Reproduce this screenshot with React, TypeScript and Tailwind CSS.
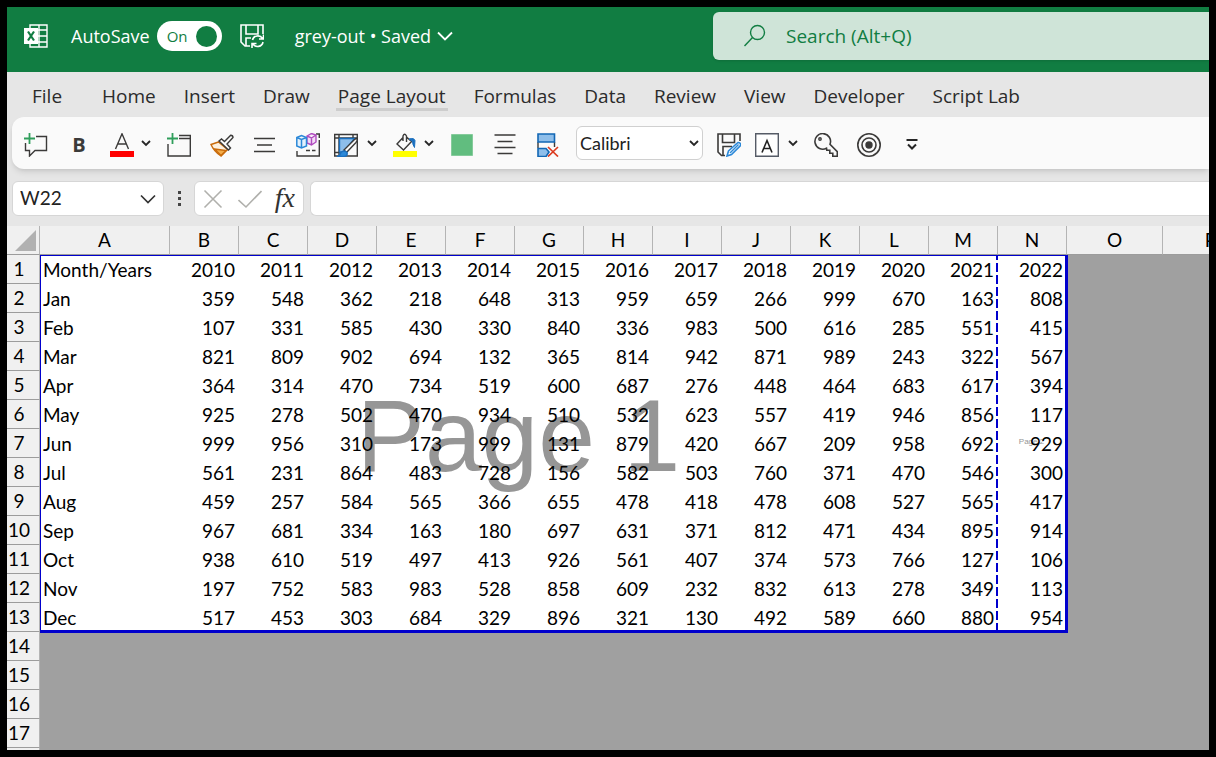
import React from 'react';
import { clsx } from 'clsx';

const tabs = [
  'File',
  'Home',
  'Insert',
  'Draw',
  'Page Layout',
  'Formulas',
  'Data',
  'Review',
  'View',
  'Developer',
  'Script Lab',
];

const years = [2010, 2011, 2012, 2013, 2014, 2015, 2016, 2017, 2018, 2019, 2020, 2021, 2022];

const rows: [string, number[]][] = [
  ['Month/Years', years],
  ['Jan', [359, 548, 362, 218, 648, 313, 959, 659, 266, 999, 670, 163, 808]],
  ['Feb', [107, 331, 585, 430, 330, 840, 336, 983, 500, 616, 285, 551, 415]],
  ['Mar', [821, 809, 902, 694, 132, 365, 814, 942, 871, 989, 243, 322, 567]],
  ['Apr', [364, 314, 470, 734, 519, 600, 687, 276, 448, 464, 683, 617, 394]],
  ['May', [925, 278, 502, 470, 934, 510, 532, 623, 557, 419, 946, 856, 117]],
  ['Jun', [999, 956, 310, 173, 999, 131, 879, 420, 667, 209, 958, 692, 929]],
  ['Jul', [561, 231, 864, 483, 728, 156, 582, 503, 760, 371, 470, 546, 300]],
  ['Aug', [459, 257, 584, 565, 366, 655, 478, 418, 478, 608, 527, 565, 417]],
  ['Sep', [967, 681, 334, 163, 180, 697, 631, 371, 812, 471, 434, 895, 914]],
  ['Oct', [938, 610, 519, 497, 413, 926, 561, 407, 374, 573, 766, 127, 106]],
  ['Nov', [197, 752, 583, 983, 528, 858, 609, 232, 832, 613, 278, 349, 113]],
  ['Dec', [517, 453, 303, 684, 329, 896, 321, 130, 492, 589, 660, 880, 954]],
];

const yearColumns = 'BCDEFGHIJKLMN'.split('');
const emptyRows = [14, 15, 16, 17];

type IconProps = { children: React.ReactNode; className?: string };

const Icon: React.FC<IconProps> = ({ children, className }) => (
  <svg
    viewBox="0 0 24 24"
    fill="none"
    stroke="#3b3a39"
    strokeWidth="1.4"
    className={clsx('size-6 shrink-0', className)}
    aria-hidden="true"
  >
    {children}
  </svg>
);

const Chevron: React.FC = () => (
  <svg viewBox="0 0 14 14" fill="none" stroke="#262626" strokeWidth="1.8" className="size-3.5" aria-hidden="true">
    <path d="M3 5l4 4 4-4" />
  </svg>
);

type ToolProps = { label: string; width?: string; children: React.ReactNode };

const Tool: React.FC<ToolProps> = ({ label, width = 'w-[29px]', children }) => (
  <button type="button" aria-label={label} className={clsx('flex shrink-0 pt-1', width)}>
    {children}
  </button>
);

const MenuArrow: React.FC<{ label: string }> = ({ label }) => (
  <button type="button" aria-label={label} className="flex w-3.5 shrink-0">
    <Chevron />
  </button>
);

const TitleBar: React.FC = () => (
  <header className="bg-[#117d42] pt-[5px] pb-3 text-white">
    <div className="flex h-12 items-center">
      <div className="flex flex-1 items-center pl-[17px] text-[18px] whitespace-nowrap">
        <Icon className="mr-[23px]">
          <path d="M6 4V1h17v22H6v-3M6 6h17M6 12h17M6 18h17M15 1v22" stroke="#fff" />
          <path d="M0 4h14v16H0z" fill="#fff" stroke="none" />
          <path d="M4 7.5l6 9M10 7.5l-6 9" stroke="#117d42" strokeWidth="2.2" />
        </Icon>
        <label className="flex items-center gap-[7px]">
          AutoSave
          <input type="checkbox" defaultChecked className="peer sr-only" />
          <span className="flex h-[30px] w-[65px] items-center justify-between rounded-full bg-white pr-[5px] pl-2.5 text-[15px] text-[#117d42]">
            On
            <span className="size-[21px] rounded-full bg-[#117d42]" />
          </span>
        </label>
        <button type="button" aria-label="Save" className="ml-[18px]">
          <Icon>
            <g stroke="#fff" strokeWidth="1.6">
              <path d="M10 22H5l-4-4V1h22v9" />
              <path d="M6 1v9h12V1" />
              <path d="M6 22v-8h5" />
              <path d="M12.5 16a5.5 5.5 0 0 1 10-1.500M23.500 10.500v4.500h-4.500M23 18a5.500 5.500 0 0 1-10 2M12 24v-4.500h4.500" />
            </g>
          </Icon>
        </button>
        <button type="button" className="ml-[31px] flex items-center gap-1.5">
          grey-out • Saved
          <svg viewBox="0 0 16 16" fill="none" stroke="#fff" strokeWidth="1.8" className="size-4" aria-hidden="true">
            <path d="M1 4.500l7 7 7-7" />
          </svg>
        </button>
      </div>
      <label className="flex h-12 w-[496px] items-center gap-[19px] rounded-l-md bg-[#cfe4d8] pl-[30px] shadow-sm">
        <Icon>
          <g stroke="#117d42">
            <circle cx="14.500" cy="8.500" r="7" />
            <path d="M9.500 13.500L1.500 22" />
          </g>
        </Icon>
        <input
          type="search"
          aria-label="Search"
          placeholder="Search (Alt+Q)"
          className="min-w-0 flex-1 bg-transparent text-[19px] text-[#117d42] outline-none placeholder:text-[#117d42]"
        />
      </label>
    </div>
  </header>
);

const RibbonTabs: React.FC = () => (
  <nav className="flex gap-6 pt-3 pb-1.5 pl-[23px] text-[19px] leading-6 whitespace-nowrap text-[#2b2b2b]">
    {tabs.map((tab) => (
      <a
        key={tab}
        href="#"
        className={clsx(
          'border-b-[3px] px-0.5',
          tab === 'File' && 'mr-3',
          tab === 'Page Layout' ? 'border-[#cdcdcd]' : 'border-transparent'
        )}
      >
        {tab}
      </a>
    ))}
  </nav>
);

const QuickTools: React.FC = () => (
  <div className="ml-[5px] flex h-[52px] items-center gap-3.5 rounded-l-xl bg-[#fafafa] pl-3 shadow-md">
    <Tool label="New Comment">
      <Icon>
        <path d="M12 3.500h10.500v14H11L5.500 23v-5.500h-4V10" />
        <path d="M5.500 0v11M0 5.500h11" stroke="#2f9e5b" strokeWidth="1.800" />
      </Icon>
    </Tool>
    <Tool label="Bold">
      <span className="w-6 text-center font-[Open_Sans] text-[20px] leading-6 font-bold text-[#3b3a39]">B</span>
    </Tool>
    <div className="flex items-center">
      <Tool label="Font Color">
        <Icon>
          <path d="M5.500 16L12 .800 18.500 16M7.800 11h8.400" />
          <path d="M0 18h24v6H0z" fill="#f00" stroke="none" />
        </Icon>
      </Tool>
      <MenuArrow label="Font Color options" />
    </div>
    <Tool label="New Window">
      <Icon>
        <path d="M12 2.500h11.300v20.500H1V11M12 5.500h11.300" />
        <path d="M5.500 0v11M0 5.500h11" stroke="#2f9e5b" strokeWidth="1.800" />
      </Icon>
    </Tool>
    <Tool label="Format Painter">
      <Icon>
        <path d="M8.500 9L1 11.500q3 7 10 11.500l6.500-6.500z" stroke="#c96a0a" fill="#fdf0de" />
        <path d="M4.500 16l11.500 1.500L11 22.500z" fill="#f3ad4a" stroke="#c96a0a" />
        <path d="M9 8l9.500 9 2-2-3.500-4 6-6.500q0-2-2.300-2.200L14.500 8.500 11.500 6z" fill="#fafafa" />
      </Icon>
    </Tool>
    <Tool label="Center">
      <Icon>
        <path d="M1 5.500h21M4 12h15M1 18.500h21" strokeWidth="1.600" />
      </Icon>
    </Tool>
    <Tool label="3D Models" width="w-6">
      <Icon>
        <path d="M20 1h3.300v4M23.300 7v16H1v-5M10 17.500h4M16 17.500h3.500" />
        <path d="M11 3l4.500-2.500L20 2v7l-4.500 3L11 10zM11 3l4.500 2L20 2M15.500 5v7" stroke="#b04bbf" fill="#f2dcf5" />
        <path d="M.800 4.500l4.700-2 5 2v8.500l-5 2-4.700-2zM.800 4.500l4.700 2 5-2M5.500 6.500V15" stroke="#2b88d8" strokeWidth="1.500" fill="#e3f1fc" />
      </Icon>
    </Tool>
    <div className="flex items-center">
      <Tool label="Format Table" width="w-[31px]">
        <Icon>
          <path d="M.700 1.500h22.600v21.500H.700zM.700 5h22.600M5 1.500V23M19 1.500V5M.700 19.500h6" />
          <path d="M5.500 5.500h15L10 19H5.500z" fill="#8ebeea" stroke="#1a6fbf" />
          <path d="M23.500 5.500q-2 0-3 1L10 17l2.500 2.500L22 9.500q1.500-2 1.500-4z" fill="#fafafa" />
          <path d="M3 23.500q3-.500 4-4 3-3 6 0 1 3.500-3 4z" fill="#2b88d8" stroke="#1a6fbf" />
        </Icon>
      </Tool>
      <MenuArrow label="Format Table options" />
    </div>
    <div className="flex items-center">
      <Tool label="Fill Color">
        <Icon>
          <path d="M10 4.500L4 11l6.500 6 8-8.500L13.500 4M10 8V3q1.500-3.500 3.500 0v6" />
          <path d="M16 6q5-1.500 6 1.500l-.500 7q-2-3-2-6z" fill="#1a6fbf" stroke="#1a6fbf" strokeWidth="1" />
          <path d="M0 18h24v6H0z" fill="#ff0" stroke="none" />
        </Icon>
      </Tool>
      <MenuArrow label="Fill Color options" />
    </div>
    <Tool label="Shape Fill">
      <Icon>
        <path d="M1.500 1.500h21v21h-21z" fill="#61bd7f" stroke="#85cb9b" strokeWidth="1" />
      </Icon>
    </Tool>
    <Tool label="Middle Align">
      <Icon>
        <path d="M1.500 2h21M4.500 8.500h15M1.500 14.500h21M4.500 20.500h15" strokeWidth="1.600" />
      </Icon>
    </Tool>
    <Tool label="Delete Rows" width="w-[26px]">
      <Icon>
        <path d="M2 9v6M18.500 9v5" />
        <path d="M2 1h16.500v8H2zM2 15.500h8l3 3.500-3 4.500H2z" fill="#8ebeea" stroke="#1267b4" strokeWidth="1.600" />
        <path d="M12 14l10 9.500M22 14l-10 9.500" stroke="#dc3b1f" strokeWidth="1.700" />
      </Icon>
    </Tool>
    <div className="relative flex w-[127px] shrink-0 items-center">
      <select
        aria-label="Font"
        className="h-[34px] w-full appearance-none rounded-md border border-[#d0d0d0] bg-white pl-[3px] font-[Lato] text-[18px] text-[#222]"
      >
        <option>Calibri</option>
      </select>
      <span className="pointer-events-none absolute right-0.5">
        <Chevron />
      </span>
    </div>
    <Tool label="Save As" width="w-6">
      <Icon>
        <path d="M8 22.500H4.500L1 19V1h22v7M5.500 1v8.500h12V1M6 22.500V13.500h9" strokeWidth="1.600" />
        <path d="M10 23l1.500-5L21 9.500q3 0 2.500 3L14.500 21.500z" fill="#fff" stroke="#2b88d8" strokeWidth="1.600" />
        <path d="M13 20l8.500-8.500" stroke="#2b88d8" strokeWidth="1.400" />
      </Icon>
    </Tool>
    <div className="flex items-center">
      <Tool label="Text Box" width="w-[31px]">
        <Icon>
          <path d="M.700 .700h22.600v22.600H.700z" fill="#fff" stroke="#555b66" />
          <path d="M7 19.500L12 7.500l5 12M8.800 15.500h6.400" strokeWidth="1.600" stroke="#222" />
        </Icon>
      </Tool>
      <MenuArrow label="Text Box options" />
    </div>
    <Tool label="Permissions">
      <Icon>
        <path d="M12.500 15.200a7.800 7.800 0 1 1 3.500-4l7.300 7.500v4.500h-4.500v-3h-3v-3h-3z" strokeWidth="1.600" />
        <circle cx="6" cy="6" r="1.200" />
      </Icon>
    </Tool>
    <Tool label="Record">
      <Icon>
        <circle cx="12" cy="12" r="11.200" strokeWidth="1.600" />
        <circle cx="12" cy="12" r="7" strokeWidth="1.600" />
        <circle cx="12" cy="12" r="3" fill="#3b3a39" />
      </Icon>
    </Tool>
    <Tool label="Customize Quick Access Toolbar" width="w-6">
      <Icon>
        <path d="M6.500 7h11M8 11.500l4 4 4-4" strokeWidth="2" stroke="#262626" />
      </Icon>
    </Tool>
  </div>
);

const FormulaBar: React.FC = () => (
  <div className="flex items-center pt-3 pb-2.5 pl-[5px]">
    <div className="flex h-[35px] w-[152px] shrink-0 items-center rounded-md border border-[#d6d6d6] bg-white pr-[7px] pl-[7px]">
      <input
        aria-label="Name Box"
        defaultValue="W22"
        className="min-w-0 flex-1 bg-transparent font-[Lato] text-[19px] text-[#222] outline-none"
      />
      <button type="button" aria-label="Name Box list">
        <svg viewBox="0 0 16 16" fill="none" stroke="#333" strokeWidth="1.700" className="size-4" aria-hidden="true">
          <path d="M1 4.500l7 7 7-7" />
        </svg>
      </button>
    </div>
    <div className="flex w-[30px] shrink-0 flex-col items-center gap-[3px]">
      <span className="size-[3px] bg-[#444]" />
      <span className="size-[3px] bg-[#444]" />
      <span className="size-[3px] bg-[#444]" />
    </div>
    <div className="flex h-[35px] w-[110px] shrink-0 items-center justify-between rounded-md border border-[#d6d6d6] bg-white pr-2 pl-1.5">
      <button type="button" aria-label="Cancel">
        <Icon>
          <path d="M3.500 3.500l17 17M20.500 3.500l-17 17" stroke="#b0b0ac" strokeWidth="1.600" />
        </Icon>
      </button>
      <button type="button" aria-label="Enter">
        <Icon>
          <path d="M0.500 13l7.500 7L23.500 4" stroke="#b0b0ac" strokeWidth="1.600" />
        </Icon>
      </button>
      <button
        type="button"
        aria-label="Insert Function"
        className="pb-0.5 font-[Liberation_Serif] text-[28px] leading-7 font-medium text-[#333] italic"
      >
        fx
      </button>
    </div>
    <input
      aria-label="Formula Bar"
      className="ml-1.5 h-[35px] min-w-0 flex-1 rounded-l-md border border-r-0 border-[#d6d6d6] bg-white px-2 outline-none"
    />
  </div>
);

// Print area frame, page break and page watermarks, drawn under the cell text
const PrintArea: React.FC = () => (
  <div
    className="absolute top-[29px] left-[33px] flex h-[378px] w-[1028px] border-t border-r-[3px] border-b-[3px] border-l border-[#0000cd] bg-white font-[Liberation_Sans] text-[#969696]"
    aria-hidden="true"
  >
    <div className="flex flex-1 items-center justify-center pb-3.5 text-[102px] leading-none">Page 1</div>
    <div className="w-0.5 bg-[repeating-linear-gradient(#0000cd_0_4px,#fff_4px_7px,#0000cd_7px_12px)]" />
    <div className="flex w-[67px] items-center justify-center pb-0.5 text-[8px] leading-none">Page 2</div>
  </div>
);

const headCell = 'border-r border-b border-r-[#b4b4b4] border-b-[#9c9c9c] bg-[#f0f0f0] p-0 font-normal';

const RowHeader: React.FC<{ row: number }> = ({ row }) => (
  <th scope="row" className={clsx(headCell, 'h-[29px] pr-2')}>
    {row}
  </th>
);

const Sheet: React.FC = () => (
  <main className="relative min-h-0 flex-1 overflow-hidden bg-[#a0a0a0]">
    <PrintArea />
    <table className="relative w-max border-separate border-spacing-0 font-[Lato] text-[19px] leading-7 text-black">
      <colgroup>
        <col className="w-[33px]" />
        <col className="w-[130px]" />
        {yearColumns.map((name) => (
          <col key={name} className="w-[69px]" />
        ))}
        <col className="w-24" />
        <col className="w-24" />
      </colgroup>
      <thead>
        <tr>
          <th className={clsx(headCell, 'h-[29px]')}>
            <svg viewBox="0 0 32 28" className="h-7 w-8" aria-label="Select all">
              <path d="M8 25L29 4v21z" fill="#b1b1b1" />
            </svg>
          </th>
          {['A', ...yearColumns, 'O', 'P'].map((name) => (
            <th key={name} scope="col" className={headCell}>
              {name}
            </th>
          ))}
        </tr>
      </thead>
      <tbody>
        {rows.map(([month, values], i) => (
          <tr key={month}>
            <RowHeader row={i + 1} />
            <td className="p-0 pl-[3px]">{month}</td>
            {values.map((value, col) => (
              <td key={yearColumns[col]} className="p-0 pr-1 text-right">
                {value}
              </td>
            ))}
          </tr>
        ))}
        {emptyRows.map((row) => (
          <tr key={row}>
            <RowHeader row={row} />
          </tr>
        ))}
        <tr>
          <th className={clsx(headCell, 'h-[29px]')} />
        </tr>
      </tbody>
    </table>
  </main>
);

const App: React.FC = () => {
  return (
    <div className="flex h-screen flex-col overflow-hidden border-[7px] border-black bg-[#e6e6e6] font-['Open_Sans',sans-serif]">
      <TitleBar />
      <RibbonTabs />
      <QuickTools />
      <FormulaBar />
      <Sheet />
    </div>
  );
};

export default App;
